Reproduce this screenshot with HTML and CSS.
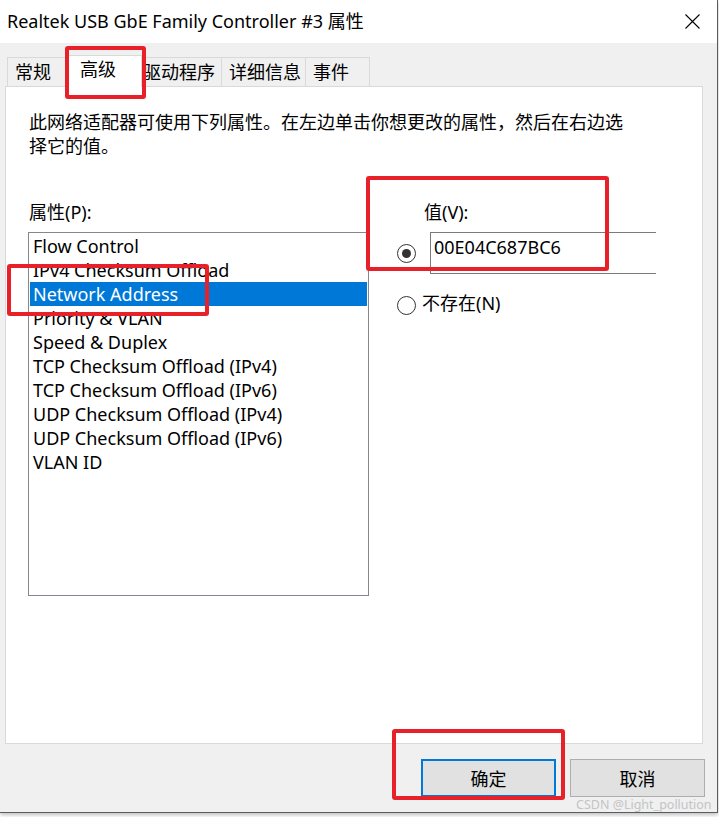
FILE: index.html
```html
<!DOCTYPE html>
<html lang="zh-CN">
<head>
    <meta charset="UTF-8">
    <title>Realtek USB GbE Family Controller #3 属性</title>
    <link rel="stylesheet" href="styles.css">
</head>
<body>
    <div class="window">
        <div class="titlebar">
            <span class="title">Realtek USB GbE Family Controller #3 属性</span>
            <svg class="close" width="15" height="15" viewBox="0 0 15 15">
                <path d="M0.5 0.5 L14.5 14.5 M14.5 0.5 L0.5 14.5" stroke="#000" stroke-width="1.1" fill="none"/>
            </svg>
        </div>

        <div class="dialog">
            <div class="tabs">
                <div class="tab tab-general">常规</div>
                <div class="tab tab-advanced active">高级</div>
                <div class="tab tab-driver">驱动程序</div>
                <div class="tab tab-details">详细信息</div>
                <div class="tab tab-events">事件</div>
            </div>

            <div class="panel">
                <p class="desc">此网络适配器可使用下列属性。在左边单击你想更改的属性，然后在右边选择它的值。</p>

                <div class="props">
                    <div class="col-left">
                        <div class="label">属性(P):</div>
                        <ul class="listbox">
                            <li>Flow Control</li>
                            <li>IPv4 Checksum Offload</li>
                            <li class="selected">Network Address</li>
                            <li>Priority &amp; VLAN</li>
                            <li>Speed &amp; Duplex</li>
                            <li>TCP Checksum Offload (IPv4)</li>
                            <li>TCP Checksum Offload (IPv6)</li>
                            <li>UDP Checksum Offload (IPv4)</li>
                            <li>UDP Checksum Offload (IPv6)</li>
                            <li>VLAN ID</li>
                        </ul>
                    </div>

                    <div class="col-right">
                        <div class="label value-label">值(V):</div>
                        <div class="option">
                            <span class="radio checked"></span>
                            <div class="textbox">00E04C687BC6</div>
                        </div>
                        <div class="option option-none">
                            <span class="radio"></span>
                            <span class="option-text">不存在(N)</span>
                        </div>
                    </div>
                </div>
            </div>

            <div class="actions">
                <button class="btn btn-primary">确定</button>
                <button class="btn">取消</button>
            </div>
        </div>

        <!-- annotation boxes drawn over the dialog -->
        <div class="mark mark-tab"></div>
        <div class="mark mark-item"></div>
        <div class="mark mark-value"></div>
        <div class="mark mark-ok"></div>

        <div class="watermark">CSDN @Light_pollution</div>
    </div>
</body>
</html>
```

FILE: styles.css
```css
* {
    margin: 0;
    padding: 0;
    box-sizing: border-box;
}

body {
    width: 719px;
    height: 817px;
    overflow: hidden;
    background-color: #FFFFFF;
    font-family: "Noto Sans", "Noto Sans CJK SC", sans-serif;
    font-size: 18px;
    color: #000000;
}

.window {
    position: relative;
    width: 718px;
    height: 813px;
    display: flex;
    flex-direction: column;
    background-color: #F0F0F0;
    border-right: 1px solid #5C5C5C;
    border-bottom: 1px solid #5C5C5C;
    box-shadow: 0 2px 4px rgba(0, 0, 0, 0.25);
}

.titlebar {
    height: 43px;
    flex-shrink: 0;
    background-color: #FFFFFF;
    display: flex;
    align-items: center;
    padding-left: 7px;
    padding-bottom: 2px;
}

.title {
    line-height: 24px;
}

.close {
    margin-left: auto;
    margin-right: 17px;
    margin-top: 2px;
}

.dialog {
    flex: 1;
    padding: 14px 14px 0 5px;
    display: flex;
    flex-direction: column;
}

/* tabs */
.tabs {
    display: flex;
    height: 29px;
    padding-left: 2px;
    align-items: flex-end;
}

.tab {
    height: 29px;
    line-height: 28px;
    padding-left: 7px;
    border: 1px solid #D9D9D9;
    border-bottom: none;
    border-left: none;
    background-color: #F0F0F0;
    white-space: nowrap;
}

.tab-general {
    width: 63px;
    border-left: 1px solid #D9D9D9;
}

.tab-advanced { width: 70px; }
.tab-driver { width: 82px; padding-left: 3px; }
.tab-details { width: 84px; }
.tab-events { width: 64px; }

.tab.active {
    position: relative;
    z-index: 2;
    height: 32px;
    margin: 0 -2px -1px -2px;
    width: 74px;
    padding-left: 11px;
    line-height: 26px;
    background-color: #FFFFFF;
    border-left: 1px solid #D9D9D9;
}

.panel {
    height: 658px;
    background-color: #FFFFFF;
    border: 1px solid #D9D9D9;
    padding: 23px 0 0 22px;
}

.desc {
    width: 604px;
    padding-left: 1px;
    line-height: 24px;
}

.props {
    display: flex;
    margin-top: 42px;
}

.label {
    line-height: 24px;
    padding-left: 1px;
    margin-bottom: 8px;
}

.listbox {
    list-style: none;
    width: 341px;
    height: 364px;
    border: 1px solid #828790;
    padding: 1px;
}

.listbox li {
    height: 24px;
    line-height: 24px;
    padding-left: 3px;
    white-space: nowrap;
}

.listbox li.selected {
    background-color: #0078D7;
    color: #FFFFFF;
}

.col-right {
    margin-left: 28px;
}

.value-label {
    padding-left: 27px;
}

.option {
    display: flex;
    align-items: center;
}

.radio {
    width: 19px;
    height: 19px;
    border: 1px solid #333333;
    border-radius: 50%;
    background-color: #FFFFFF;
    display: flex;
    align-items: center;
    justify-content: center;
    flex-shrink: 0;
}

.radio.checked::after {
    content: "";
    width: 9px;
    height: 9px;
    border-radius: 50%;
    background-color: #333333;
}

.textbox {
    margin-left: 14px;
    width: 226px;
    height: 42px;
    border: 1px solid #7A7A7A;
    border-right: none;
    padding: 2px 0 0 3px;
    line-height: 24px;
}

.option-none {
    margin-top: 21px;
}

.option-none .radio {
    margin-top: 1px;
}

.option-text {
    margin-left: 6px;
    margin-top: -4px;
    line-height: 24px;
}

/* buttons */
.actions {
    display: flex;
    justify-content: flex-end;
    gap: 14px;
    padding-top: 15px;
    margin-right: -2px;
}

.btn {
    width: 135px;
    height: 38px;
    background-color: #E1E1E1;
    border: 1px solid #ADADAD;
    font-family: "Noto Sans", "Noto Sans CJK SC", sans-serif;
    font-size: 18px;
    color: #000000;
}

.btn-primary {
    border: 2px solid #0078D7;
}

/* red annotation boxes */
.mark {
    position: absolute;
    border: 4px solid #E8202A;
    border-radius: 3px;
    z-index: 5;
}

.mark-tab {
    left: 65px;
    top: 46px;
    width: 81px;
    height: 53px;
}

.mark-item {
    left: 7px;
    top: 264px;
    width: 202px;
    height: 52px;
}

.mark-value {
    left: 366px;
    top: 176px;
    width: 243px;
    height: 95px;
}

.mark-ok {
    left: 392px;
    top: 729px;
    width: 173px;
    height: 71px;
}

.watermark {
    position: absolute;
    left: 576px;
    top: 798px;
    font-size: 12.5px;
    line-height: 13px;
    white-space: nowrap;
    color: #C4C4C4;
    z-index: 6;
}
```
